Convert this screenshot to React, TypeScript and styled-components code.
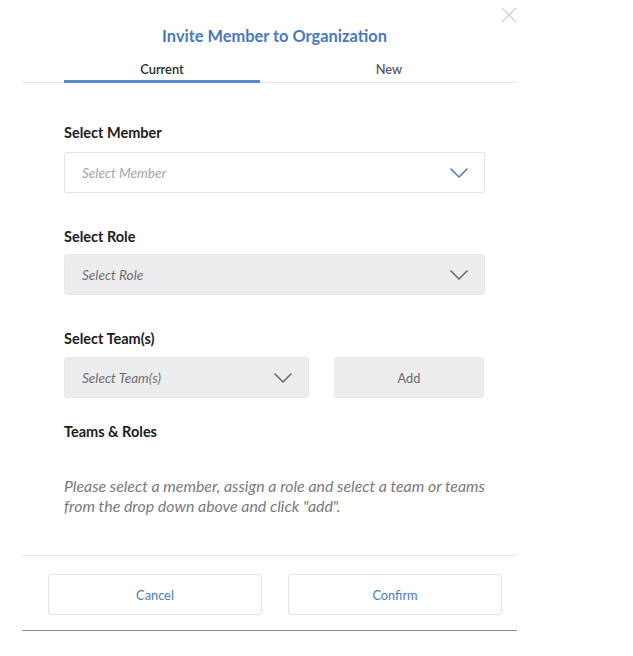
import React from "react";
import styled, { createGlobalStyle } from "styled-components";

const Global = createGlobalStyle`
  html, body { margin: 0; padding: 0; background: #ffffff; }
  body { font-family: Lato, "Open Sans", "Liberation Sans", sans-serif; }
  * { box-sizing: border-box; }
`;

const Page = styled.div`
  width: 633px;
  height: 656px;
  background: #ffffff;
  padding-left: 22px;
`;

const Modal = styled.div`
  position: relative;
  width: 495px;
  display: flex;
  flex-direction: column;
`;

const CloseButton = styled.button`
  position: absolute;
  top: 7px;
  right: 0;
  width: 16px;
  height: 16px;
  padding: 0;
  border: none;
  background: transparent;
  display: flex;
  align-items: center;
  justify-content: center;
`;

const Title = styled.h1`
  margin: 26px 0 0 42px;
  width: 421px;
  text-align: center;
  font-size: 16.4px;
  line-height: 20px;
  font-weight: 700;
  color: #4a79bd;
`;

const TabBar = styled.div`
  margin-top: 12px;
  padding-left: 42px;
  display: grid;
  grid-template-columns: 196px 258px;
  border-bottom: 1px solid #e8e8e8;
`;

const Tab = styled.div<{ $active?: boolean }>`
  height: 25px;
  text-align: center;
  font-size: 12.8px;
  line-height: 22px;
  font-weight: 600;
  color: ${(p) => (p.$active ? "#2a2a2a" : "#5a5a5a")};
  border-bottom: 3px solid ${(p) => (p.$active ? "#5b87c6" : "transparent")};
  margin-bottom: -1px;
`;

const Body = styled.div`
  padding: 0 10px 0 42px;
  display: flex;
  flex-direction: column;
`;

const Label = styled.div<{ $top: number }>`
  margin-top: ${(p) => p.$top}px;
  font-size: 14.5px;
  line-height: 18px;
  font-weight: 700;
  color: #1c1c1c;
`;

const Row = styled.div<{ $top: number }>`
  margin-top: ${(p) => p.$top}px;
  display: flex;
  gap: 25px;
`;

const SelectBox = styled.div<{ $disabled?: boolean; $width?: number }>`
  width: ${(p) => (p.$width ? `${p.$width}px` : "421px")};
  height: 41px;
  border-radius: 3px;
  border: 1px solid ${(p) => (p.$disabled ? "#e9e9eb" : "#e3e3e3")};
  background: ${(p) => (p.$disabled ? "#ededef" : "#ffffff")};
  display: flex;
  align-items: center;
  justify-content: space-between;
  padding: 0 16px 0 17px;
`;

const Placeholder = styled.span<{ $disabled?: boolean }>`
  font-size: 13.6px;
  font-style: italic;
  color: ${(p) => (p.$disabled ? "#6f6f6f" : "#a6a6a6")};
`;

const AddButton = styled.button`
  width: 150px;
  height: 41px;
  border-radius: 3px;
  border: 1px solid #e9e9eb;
  background: #ededef;
  font-family: inherit;
  font-size: 12.8px;
  color: #6a6a6a;
`;

const Help = styled.p`
  margin: 35px 0 0 0;
  font-size: 15.9px;
  line-height: 20px;
  font-style: italic;
  color: #7a7a7a;
  white-space: nowrap;
`;

const Divider = styled.div`
  margin-top: 39px;
  height: 1px;
  background: #e9e9e9;
`;

const Footer = styled.div`
  margin-top: 18px;
  padding-left: 26px;
  display: flex;
  gap: 26px;
`;

const FooterButton = styled.button`
  width: 214px;
  height: 41px;
  border-radius: 3px;
  border: 1px solid #e3e3e3;
  background: #ffffff;
  font-family: inherit;
  font-size: 12.8px;
  color: #4d7bbd;
`;

const BottomRule = styled.div`
  margin-top: 15px;
  height: 1px;
  background: #8a8a8a;
`;

const Chevron = ({ color }: { color: string }) => (
  <svg width="18" height="10" viewBox="0 0 18 10" fill="none">
    <path d="M1 1 L9 9 L17 1" stroke={color} strokeWidth="1.6" strokeLinecap="round" strokeLinejoin="round" />
  </svg>
);

export default function App() {
  return (
    <Page>
      <Global />
      <Modal>
        <CloseButton aria-label="Close">
          <svg width="16" height="16" viewBox="0 0 16 16">
            <path d="M1 1 L15 15 M15 1 L1 15" stroke="#d2d2d2" strokeWidth="1.3" />
          </svg>
        </CloseButton>
        <Title>Invite Member to Organization</Title>
        <TabBar>
          <Tab $active>Current</Tab>
          <Tab>New</Tab>
        </TabBar>
        <Body>
          <Label $top={41}>Select Member</Label>
          <Row $top={10}>
            <SelectBox>
              <Placeholder>Select Member</Placeholder>
              <Chevron color="#4a79bd" />
            </SelectBox>
          </Row>
          <Label $top={35}>Select Role</Label>
          <Row $top={8}>
            <SelectBox $disabled>
              <Placeholder $disabled>Select Role</Placeholder>
              <Chevron color="#6a6a6a" />
            </SelectBox>
          </Row>
          <Label $top={35}>Select Team(s)</Label>
          <Row $top={9}>
            <SelectBox $disabled $width={245}>
              <Placeholder $disabled>Select Team(s)</Placeholder>
              <Chevron color="#6a6a6a" />
            </SelectBox>
            <AddButton>Add</AddButton>
          </Row>
          <Label $top={25}>Teams &amp; Roles</Label>
          <Help>
            Please select a member, assign a role and select a team or teams
            <br />
            from the drop down above and click "add".
          </Help>
        </Body>
        <Divider />
        <Footer>
          <FooterButton>Cancel</FooterButton>
          <FooterButton>Confirm</FooterButton>
        </Footer>
        <BottomRule />
      </Modal>
    </Page>
  );
}
